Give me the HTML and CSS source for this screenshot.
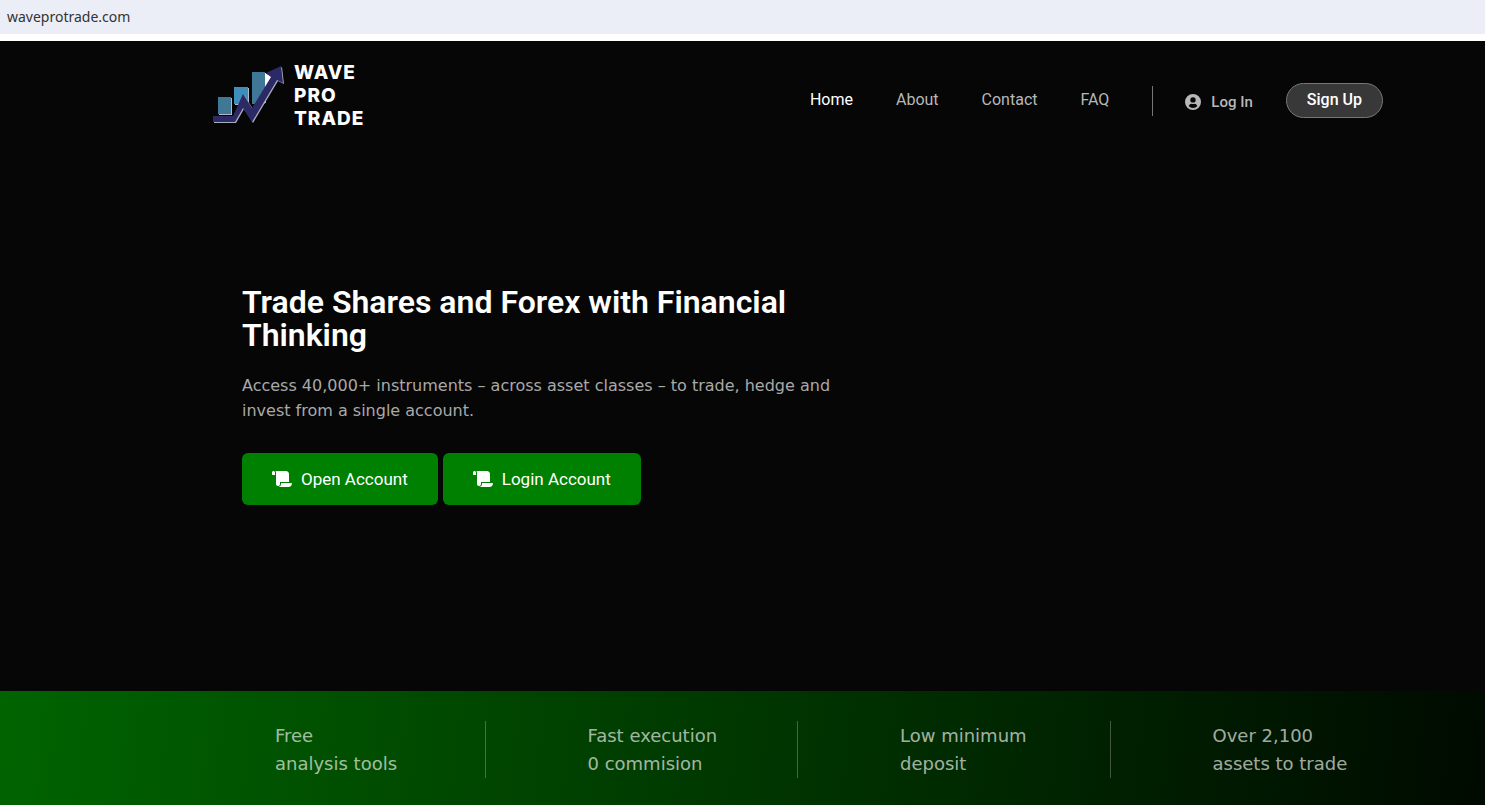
FILE: index.html
```html
<!DOCTYPE html>
<html lang="en">
<head>
<meta charset="utf-8">
<meta name="viewport" content="width=device-width, initial-scale=1">
<title>Wave Pro Trade</title>
<link rel="stylesheet" href="styles.css">
</head>
<body>
<div class="address-bar">waveprotrade.com</div>
<div class="site">
  <header class="header">
    <a class="logo" href="#">
      <svg class="logo-mark" viewBox="0 0 72 60" aria-hidden="true">
        <path fill="#b4b8c4" d="M6 32h13v17H6zM22 22h14v17H22zM40 7h13v30H40z"/>
        <path fill="#3f7797" d="M5 31h13v17H5zM39 6h13v32H39z"/>
        <path fill="#3f8dbd" d="M21 21h14v17H21z"/>
        <path fill="#fff" d="M52 7l7 4-7 12z"/>
        <path fill="#a9acba" d="M1 51h20l10-22 9 14 19-31-4-4L69 1l2 17-6-3-25 42-9-14-8 14H1z"/>
        <path fill="#2c2a66" d="M0 50h20l10-22 9 14 19-31-5-4 15-7 2 17-6-3-25 42-9-14-8 14H0z"/>
      </svg>
      <span class="logo-name">WAVE<br>PRO<br>TRADE</span>
    </a>
    <nav class="nav">
      <a class="nav-link active" href="#">Home</a>
      <a class="nav-link" href="#about">About</a>
      <a class="nav-link" href="#contact">Contact</a>
      <a class="nav-link" href="#faq">FAQ</a>
    </nav>
    <div class="account">
      <a class="login" href="#login">
        <svg class="user-icon" viewBox="0 0 16 16" aria-hidden="true">
          <path fill="currentColor" fill-rule="evenodd" d="M8 0a8 8 0 1 0 0 16A8 8 0 0 0 8 0zm0 3.200a2.700 2.700 0 1 1 0 5.400 2.700 2.700 0 0 1 0-5.400zM3.600 12q1.200-2.300 3-2.300 1.400.5 2.800 0 1.800 0 3 2.300A6 6 0 0 1 3.600 12z"/>
        </svg>
        Log In
      </a>
      <button class="signup" type="button">Sign Up</button>
    </div>
  </header>
  <main class="hero">
    <div class="hero-content">
      <h1 class="hero-title">Trade Shares and Forex with Financial Thinking</h1>
      <p class="hero-text">Access 40,000+ instruments – across asset classes – to trade, hedge and invest from a single account.</p>
      <div class="hero-actions">
        <button class="action" type="button">
          <svg class="scroll-icon" viewBox="0 0 640 512" aria-hidden="true"><path fill="currentColor" d="M48 0C21.500 0 0 21.500 0 48v64c0 8.800 7.200 16 16 16h80V48C96 21.500 74.500 0 48 0zm208 412.600V352h288V96c0-52.900-43-96-96-96H111.600C121.800 13.400 128 29.900 128 48v368c0 38.900 34.600 69.700 74.800 63.100 31.200-5.100 53.200-34.900 53.200-66.500zM288 384v32c0 52.900-43.100 96-96 96h336c61.900 0 112-50.100 112-112 0-8.800-7.200-16-16-16H288z"/></svg>
          Open Account
        </button>
        <button class="action" type="button">
          <svg class="scroll-icon" viewBox="0 0 640 512" aria-hidden="true"><path fill="currentColor" d="M48 0C21.500 0 0 21.500 0 48v64c0 8.800 7.200 16 16 16h80V48C96 21.500 74.500 0 48 0zm208 412.600V352h288V96c0-52.900-43-96-96-96H111.600C121.800 13.400 128 29.900 128 48v368c0 38.900 34.600 69.700 74.800 63.100 31.200-5.100 53.200-34.900 53.200-66.500zM288 384v32c0 52.900-43.100 96-96 96h336c61.900 0 112-50.100 112-112 0-8.800-7.200-16-16-16H288z"/></svg>
          Login Account
        </button>
      </div>
    </div>
  </main>
  <section class="features">
    <div class="feature">Free<br>analysis tools</div>
    <div class="feature">Fast execution<br>0 commision</div>
    <div class="feature">Low minimum<br>deposit</div>
    <div class="feature">Over 2,100<br>assets to trade</div>
  </section>
</div>
</body>
</html>
```
FILE: styles.css
```css
* {
  box-sizing: border-box;
}

body {
  margin: 0;
  min-height: 100vh;
  display: flex;
  flex-direction: column;
  background: #fff;
  font-family: Roboto, "Liberation Sans", sans-serif;
}

a {
  color: inherit;
  text-decoration: none;
}

.address-bar {
  padding: 7px;
  margin-bottom: 7px;
  background: #ebeef7;
  color: #333;
  font-family: "Noto Sans", sans-serif;
  font-size: 14px;
  line-height: 20px;
}

.site {
  flex: 1;
  display: flex;
  flex-direction: column;
  background: #060606;
}

.header {
  display: flex;
  align-items: center;
  padding: 20px 102px 20px 213px;
  font-size: 16px;
  line-height: 20px;
}

.logo {
  display: flex;
  align-items: center;
  gap: 9px;
  color: #fff;
}

.logo-mark {
  width: 72px;
  height: 60px;
}

.logo-name {
  font-family: Inter, sans-serif;
  font-size: 19px;
  font-weight: 800;
  line-height: 23px;
  letter-spacing: 1px;
}

.nav {
  display: flex;
  gap: 43px;
  margin-left: auto;
  padding-top: 9px;
}

.nav-link {
  color: #b8b8b8;
}

.nav-link.active {
  color: #fff;
}

.account {
  display: flex;
  align-items: center;
  gap: 33px;
  margin-left: 43px;
  padding-top: 10px;
}

.login {
  display: flex;
  align-items: center;
  gap: 10px;
  padding: 6px 0 4px 32px;
  border-left: 1px solid #767676;
  color: #b8b8b8;
  font-size: 15px;
  font-weight: 500;
}

.user-icon {
  width: 16px;
  height: 16px;
}

.signup {
  padding: 6px 20px 8px;
  border: 1px solid #777;
  border-radius: 20px;
  background: #383838;
  color: #fff;
  font: 500 16px/19px Roboto, sans-serif;
}

.hero {
  flex: 1;
  display: flex;
  align-items: center;
  padding: 0 102px 50px 242px;
}

.hero-content {
  max-width: 610px;
}

.hero-title {
  margin: 0 0 21px;
  color: #fff;
  font-size: 32px;
  font-weight: 600;
  line-height: 33px;
}

.hero-text {
  margin: 0 0 30px;
  color: #a9a9a9;
  font-family: "DejaVu Sans", Verdana, sans-serif;
  font-size: 16px;
  line-height: 25px;
}

.hero-actions {
  display: flex;
  gap: 5px;
}

.action {
  display: flex;
  align-items: center;
  gap: 9px;
  padding: 16px 30px;
  border: 0;
  border-radius: 6px;
  background: #008000;
  color: #fff;
  font: 400 17px/20px Roboto, sans-serif;
}

.scroll-icon {
  width: 20px;
  height: 16px;
}

.features {
  display: grid;
  grid-template-columns: repeat(4, 1fr);
  padding: 30px 62px 27px 173px;
  background: linear-gradient(97deg, #006400, #000a00);
}

.feature {
  padding: 1px 0 0 102px;
  border-right: 1px solid rgba(255, 255, 255, 0.25);
  color: rgba(255, 255, 255, 0.65);
  font-family: "DejaVu Sans", Verdana, sans-serif;
  font-size: 18px;
  line-height: 28px;
}

.feature:last-child {
  border-right-color: transparent;
}
```
